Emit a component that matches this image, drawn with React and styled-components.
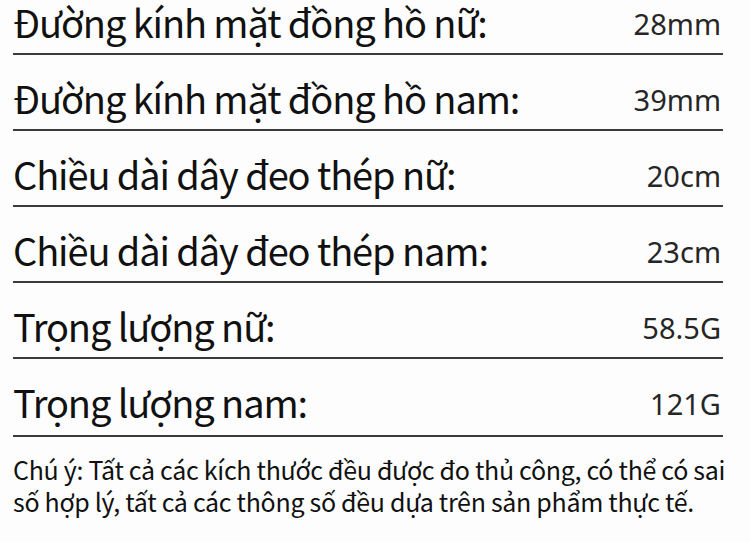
import React from "react";
import styled, { createGlobalStyle } from "styled-components";

const specs = [
  { label: "Đường kính mặt đồng hồ nữ:", value: "28mm" },
  { label: "Đường kính mặt đồng hồ nam:", value: "39mm" },
  { label: "Chiều dài dây đeo thép nữ:", value: "20cm" },
  { label: "Chiều dài dây đeo thép nam:", value: "23cm" },
  { label: "Trọng lượng nữ:", value: "58.5G" },
  { label: "Trọng lượng nam:", value: "121G", tall: true },
];

export default function App() {
  return (
    <Page>
      <GlobalStyle />
      <SpecList>
        {specs.map((spec) => (
          <SpecRow key={spec.label} $tall={spec.tall}>
            <Label>{spec.label}</Label>
            <Value>{spec.value}</Value>
          </SpecRow>
        ))}
      </SpecList>
      <Note>
        Chú ý: Tất cả các kích thước đều được đo thủ công, có thể có sai số hợp
        lý, tất cả các thông số đều dựa trên sản phẩm thực tế.
      </Note>
    </Page>
  );
}

const GlobalStyle = createGlobalStyle`
  body {
    margin: 0;
    background: #fff;
    overflow: hidden;
  }
`;

const Page = styled.div`
  width: 750px;
  height: 542px;
  overflow: hidden;
  background: #fdfdfd;
  color: #111;
`;

const SpecList = styled.div`
  margin-top: -21px;
  padding: 0 27px 0 13px;
`;

const SpecRow = styled.div`
  display: flex;
  justify-content: space-between;
  align-items: flex-end;
  height: ${(p) => (p.$tall ? "78px" : "76px")};
  padding-bottom: ${(p) => (p.$tall ? "14px" : "12px")};
  box-sizing: border-box;
  border-bottom: 2px solid #3a3a3a;
`;

const Label = styled.div`
  font-family: "Noto Sans CJK SC", "Noto Sans", sans-serif;
  font-size: 38px;
  line-height: 1;
  letter-spacing: -1.1px;
`;

const Value = styled.div`
  font-family: "Noto Sans", sans-serif;
  font-size: 29px;
  line-height: 1;
  color: #262626;
  margin-right: 2px;
  padding-bottom: 3px;
`;

const Note = styled.p`
  margin: 16px 0 0 13px;
  width: 726px;
  font-family: "Noto Sans CJK SC", sans-serif;
  font-size: 25px;
  line-height: 32px;
  letter-spacing: -0.3px;
  color: #111;
`;
